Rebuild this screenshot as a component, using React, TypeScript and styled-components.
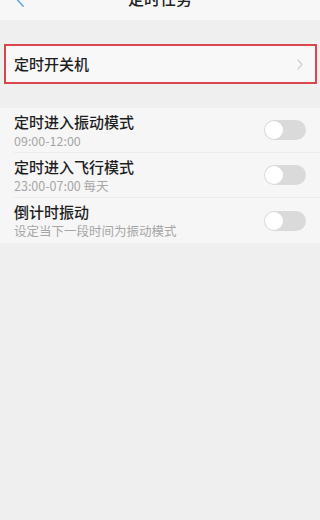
import styled, { createGlobalStyle } from "styled-components";

const GlobalStyle = createGlobalStyle`
    html, body {
        margin: 0;
        padding: 0;
        background: #efefef;
        font-family: "Noto Sans CJK SC", "Noto Sans", sans-serif;
    }
`

type Task = {
    title: string
    sub: string
}

const tasks: Task[] = [
    { title: "定时进入振动模式", sub: "09:00-12:00" },
    { title: "定时进入飞行模式", sub: "23:00-07:00 每天" },
    { title: "倒计时振动", sub: "设定当下一段时间为振动模式" },
]

export default function App() {
    return (
        <Page>
            <GlobalStyle />
            <Header>
                <BackIcon viewBox="0 0 12 20">
                    <path d="M10 1 L2 10 L10 19" fill="none" stroke="#5aa6e4" strokeWidth="1.6" strokeLinecap="round" strokeLinejoin="round" />
                </BackIcon>
                <Title>定时任务</Title>
            </Header>
            <Gap />
            <HighlightRow>
                <RowTitle>定时开关机</RowTitle>
                <Chevron viewBox="0 0 6 11">
                    <path d="M1 1 L5 5.5 L1 10" fill="none" stroke="#cfcfcf" strokeWidth="1.2" strokeLinecap="round" strokeLinejoin="round" />
                </Chevron>
            </HighlightRow>
            <Gap />
            <List>
                {tasks.map((t, i) => (
                    <TaskRow key={t.title} last={i === tasks.length - 1}>
                        <TextBlock>
                            <RowTitle>{t.title}</RowTitle>
                            <SubText>{t.sub}</SubText>
                        </TextBlock>
                        <Toggle>
                            <Knob />
                        </Toggle>
                    </TaskRow>
                ))}
            </List>
        </Page>
    )
}

const Page = styled.div`
    width: 320px;
    min-height: 520px;
    background: #efefef;
    overflow: hidden;
`
const Header = styled.div`
    height: 44px;
    margin-top: -24px;
    background: #f7f7f7;
    display: flex;
    align-items: center;
    justify-content: center;
    position: relative;
`
const BackIcon = styled.svg`
    position: absolute;
    left: 14px;
    top: 12px;
    width: 11px;
    height: 20px;
`
const Title = styled.span`
    font-size: 16px;
    font-weight: 500;
    color: #222;
`
const Gap = styled.div`
    height: 24px;
`
const HighlightRow = styled.div`
    margin: 0 3px 0 4px;
    height: 40px;
    box-sizing: border-box;
    border: 2px solid #d9464d;
    background: #f8f8f8;
    display: flex;
    align-items: center;
    justify-content: space-between;
    padding: 0 12px 0 8px;
`
const Chevron = styled.svg`
    width: 6px;
    height: 11px;
`
const List = styled.div`
    background: #f6f6f6;
    padding-left: 14px;
`
const TaskRow = styled.div<{ last: boolean }>`
    height: 45px;
    display: flex;
    align-items: center;
    justify-content: space-between;
    padding-right: 14px;
    box-sizing: border-box;
    border-bottom: ${p => (p.last ? "none" : "1px solid #ececec")};
`
const TextBlock = styled.div`
    display: flex;
    flex-direction: column;
`
const RowTitle = styled.span`
    font-size: 15px;
    line-height: 20px;
    font-weight: 500;
    color: #1e1e1e;
`
const SubText = styled.span`
    font-size: 12.5px;
    line-height: 17px;
    color: #a6a6a6;
`
const Toggle = styled.div`
    width: 42px;
    height: 20px;
    border-radius: 10px;
    background: #dadada;
    display: flex;
    align-items: center;
    padding: 0 1px;
    box-sizing: border-box;
`
const Knob = styled.div`
    width: 18px;
    height: 18px;
    border-radius: 50%;
    background: #fff;
`
